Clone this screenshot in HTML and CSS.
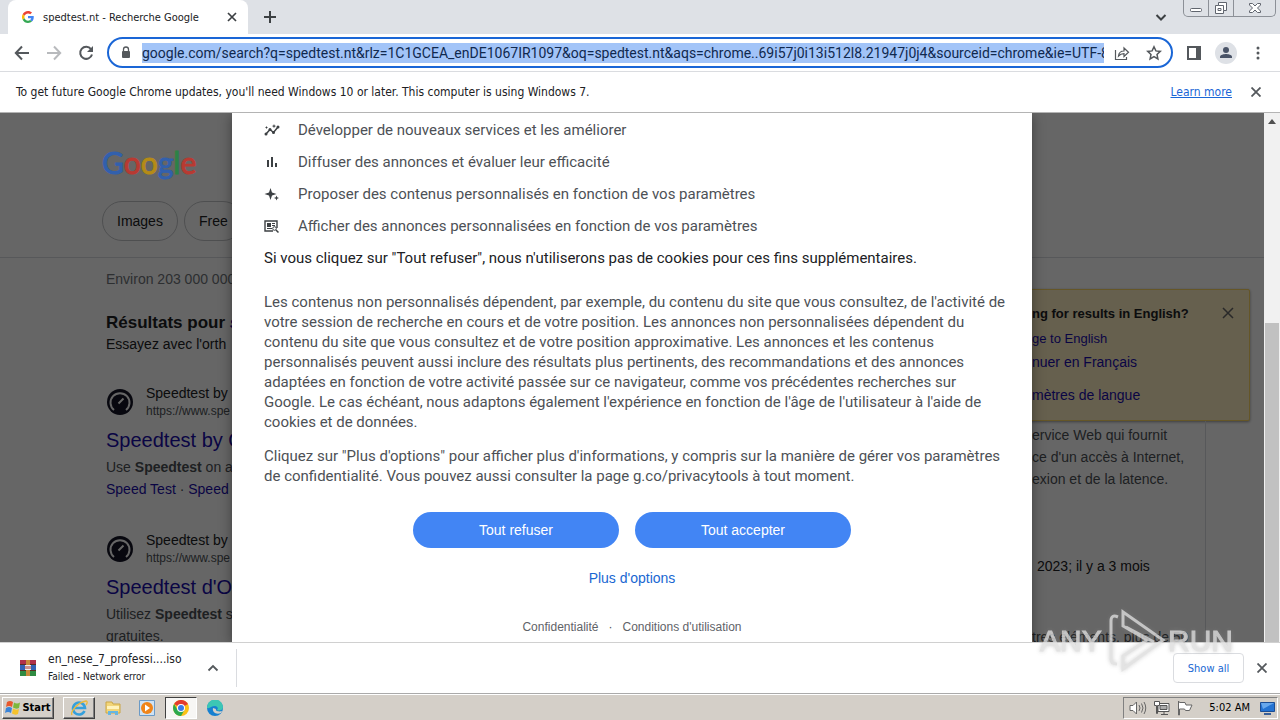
FILE: index.html
```
<!DOCTYPE html>
<html lang="fr">
<head>
<meta charset="utf-8">
<title>spedtest.nt - Recherche Google</title>
<link rel="stylesheet" href="styles.css">
</head>
<body>
<div class="desktop">
  <header class="tabstrip">
    <div class="tab">
      <svg class="favicon" viewBox="0 0 48 48" aria-hidden="true"><path fill="#ea4335" d="M24 9.500c3.500 0 6.700 1.200 9.200 3.600l6.900-6.900C35.900 2.400 30.500 0 24 0 14.600 0 6.500 5.400 2.600 13.200l8 6.200C12.400 13.700 17.700 9.500 24 9.500z"/><path fill="#4285f4" d="M47 24.500c0-1.600-.2-3.100-.4-4.500H24v9h13c-.6 3-2.300 5.500-4.800 7.200l7.700 6C44.400 38 47 31.800 47 24.500z"/><path fill="#fbbc05" d="M10.500 28.600a14.500 14.500 0 0 1 0-9.200l-8-6.200a24 24 0 0 0 0 21.600z"/><path fill="#34a853" d="M24 48c6.500 0 12-2.100 15.900-5.800l-7.700-6c-2.200 1.500-4.900 2.300-8.200 2.300-6.300 0-11.600-4.200-13.500-9.900l-8 6.200C6.500 42.600 14.600 48 24 48z"/></svg>
      <span class="tab-title">spedtest.nt - Recherche Google</span>
      <button class="icon-btn" aria-label="Close tab"><svg class="i10" viewBox="0 0 10 10"><path d="M1 1l8 8m0-8l-8 8" stroke="#3c4043" stroke-width="1.700"/></svg></button>
    </div>
    <button class="icon-btn new-tab" aria-label="New tab"><svg class="i12" viewBox="0 0 12 12"><path d="M6 0v12M0 6h12" stroke="#3c4043" stroke-width="2"/></svg></button>
    <button class="icon-btn tab-search" aria-label="Search tabs"><svg class="i12" viewBox="0 0 12 12"><path d="M1.500 4L6 8.500 10.500 4" fill="none" stroke="#3c4043" stroke-width="2"/></svg></button>
    <div class="win-controls">
      <button aria-label="Minimize"><svg width="14" height="14" viewBox="0 0 14 14"><rect x="1.500" y="7.500" width="11" height="3" rx="1" fill="#fff" stroke="#60656e"/></svg></button>
      <button aria-label="Restore"><svg width="14" height="14" viewBox="0 0 14 14"><path d="M4.500 1.500h8v8h-3v3h-8v-8h3z" fill="#fff" stroke="#60656e"/><path d="M4.500 4.500h5v5M4 7.500h3v2H4z" fill="none" stroke="#60656e"/></svg></button>
      <button class="win-close" aria-label="Close"><svg width="14" height="14" viewBox="0 0 14 14"><path d="M1.500 2.500h3L7 5l2.500-2.500h3V4L9.500 7l3 3v1.500h-3L7 9l-2.500 2.500h-3V10l3-3-3-3z" fill="#fff" stroke="#60656e"/></svg></button>
    </div>
  </header>

  <nav class="toolbar">
    <button class="icon-btn" aria-label="Back"><svg class="i16" viewBox="0 0 16 16"><path d="M15 8H2m6-6.500L1.800 8 8 14.500" fill="none" stroke="#54585c" stroke-width="2"/></svg></button>
    <button class="icon-btn" aria-label="Forward"><svg class="i16" viewBox="0 0 16 16"><path d="M1 8h13M8 1.500L14.200 8 8 14.500" fill="none" stroke="#b8babd" stroke-width="2"/></svg></button>
    <button class="icon-btn" aria-label="Reload"><svg class="i16" viewBox="0 0 16 16"><path d="M13 4.200A6 6 0 1 0 14 9.500" fill="none" stroke="#54585c" stroke-width="2"/><path d="M15 1v6H9z" fill="#54585c"/></svg></button>
    <div class="omnibox">
      <svg class="lock" viewBox="0 0 10 13"><path d="M2.500 6V3.500a2.500 2.500 0 0 1 5 0V6" fill="none" stroke="#54585c" stroke-width="1.300"/><rect x="1" y="5" width="8" height="7" rx="1" fill="#54585c"/></svg>
      <label class="url-label"><span class="sr">Address</span><input class="url" type="text" value="google.com/search?q=spedtest.nt&amp;rlz=1C1GCEA_enDE1067IR1097&amp;oq=spedtest.nt&amp;aqs=chrome..69i57j0i13i512l8.21947j0j4&amp;sourceid=chrome&amp;ie=UTF-8"></label>
      <button class="icon-btn" aria-label="Share"><svg class="i16" viewBox="0 0 16 16"><path d="M1.500 5v9.500h11V12M4.500 11c.4-3.500 2.500-5 5.500-5V3l4.500 4.300L10 11.500V8.700c-2.500 0-4 .6-5.500 2.300z" fill="none" stroke="#54585c" stroke-width="1.200"/></svg></button>
      <button class="icon-btn" aria-label="Bookmark"><svg class="i16" viewBox="0 0 16 16"><path d="M8 1.800l1.900 4.100 4.400.5-3.300 3 .9 4.500L8 11.600l-3.900 2.300.9-4.500-3.300-3 4.400-.5z" fill="none" stroke="#54585c" stroke-width="1.500"/></svg></button>
    </div>
    <button class="icon-btn" aria-label="Side panel"><svg class="i16" viewBox="0 0 16 16"><path d="M2 2h12v12H2z" fill="none" stroke="#54585c" stroke-width="2"/><path d="M10 1h5v14h-5z" fill="#54585c"/></svg></button>
    <button class="icon-btn profile" aria-label="Profile"><svg width="22" height="22" viewBox="0 0 22 22"><circle cx="11" cy="11" r="11" fill="#dee1e6"/><circle cx="11" cy="8" r="3" fill="#4a5468"/><path d="M5 16v-1.200C5 12.800 9 12 11 12s6 .8 6 2.800V16z" fill="#4a5468"/></svg></button>
    <button class="icon-btn" aria-label="Menu"><svg class="i16" viewBox="0 0 16 16" fill="#54585c"><circle cx="8" cy="3" r="1.500"/><circle cx="8" cy="8" r="1.500"/><circle cx="8" cy="13" r="1.500"/></svg></button>
  </nav>

  <div class="infobar">
    <span>To get future Google Chrome updates, you'll need Windows 10 or later. This computer is using Windows 7.</span>
    <a class="learn" href="#">Learn more</a>
    <button class="icon-btn" aria-label="Dismiss"><svg class="i10" viewBox="0 0 10 10"><path d="M.5.5l9 9m0-9l-9 9" stroke="#54585c" stroke-width="1.800"/></svg></button>
  </div>

  <div class="viewport">
    <div class="page">
      <div class="results" aria-hidden="true">
        <div class="search-head">
          <div class="logo"><span class="b">G</span><span class="r">o</span><span class="y">o</span><span class="b">g</span><span class="g">l</span><span class="r">e</span></div>
          <div class="chips"><a href="#" class="chip">Images</a><a href="#" class="chip">Free</a></div>
        </div>
        <div class="columns">
          <main class="list">
            <p class="stats">Environ 203 000 000</p>
            <p class="did">Résultats pour <a href="#"><i>s</i></a></p>
            <p class="try">Essayez avec l'orth</p>
            <article class="hit">
              <div class="site"><svg class="gauge" viewBox="0 0 28 28"><circle cx="14" cy="14" r="13" fill="#141526"/><path d="M8 22a9.500 9.500 0 1 1 12 0" fill="none" stroke="#fff" stroke-width="2"/><path d="M12.500 15.500l5-5" stroke="#fff" stroke-width="2"/></svg><div class="who"><span>Speedtest by</span><cite>https://www.spe</cite></div></div>
              <h3><a href="#">Speedtest by O</a></h3>
              <p>Use <b>Speedtest</b> on a</p>
              <p><a href="#">Speed Test</a> · <a href="#">Speed</a></p>
            </article>
            <article class="hit">
              <div class="site"><svg class="gauge" viewBox="0 0 28 28"><circle cx="14" cy="14" r="13" fill="#141526"/><path d="M8 22a9.500 9.500 0 1 1 12 0" fill="none" stroke="#fff" stroke-width="2"/><path d="M12.500 15.500l5-5" stroke="#fff" stroke-width="2"/></svg><div class="who"><span>Speedtest by</span><cite>https://www.spe</cite></div></div>
              <h3><a href="#">Speedtest d'O</a></h3>
              <p>Utilisez <b>Speedtest</b> s<br>gratuites.</p>
            </article>
          </main>
          <aside class="side">
            <div class="lang">
              <div class="lang-text">
                <b>ng for results in English?</b>
                <a class="small" href="#">ge to English</a>
                <a class="tight" href="#">nuer en Français</a>
                <a class="last" href="#">mètres de langue</a>
              </div>
              <button class="icon-btn" aria-label="Fermer"><svg class="i12" viewBox="0 0 12 12"><path d="M1 1l10 10M11 1L1 11" stroke="#666" stroke-width="1.500"/></svg></button>
            </div>
            <div class="card">
              <p>ervice Web qui fournit<br>ce d'un accès à Internet,<br>exion et de la latence.</p>
              <p class="date">2023; il y a 3 mois</p>
              <p>tres éléments, plus de 50</p>
            </div>
          </aside>
        </div>
      </div>
      <div class="shade"></div>
      <section class="dialog" role="dialog" aria-label="Cookies">
        <ul class="uses">
          <li><svg class="i16" viewBox="0 0 16 16"><path d="M2 12l4-4.500 3.500 3L14 5" fill="none" stroke="#3c4043" stroke-width="1.500"/><g fill="#3c4043"><circle cx="2" cy="12" r="1.500"/><circle cx="6" cy="7.500" r="1.500"/><circle cx="9.500" cy="10.500" r="1.500"/><circle cx="14" cy="5" r="1.500"/><path d="M10 2l.6 1.500 1.500.6-1.500.6L10 6.200l-.6-1.500-1.500-.6 1.500-.6zM2.500 4l.5 1 1 .5-1 .5-.5 1-.5-1-1-.5 1-.5z"/></g></svg>Développer de nouveaux services et les améliorer</li>
          <li><svg class="i16" viewBox="0 0 16 16"><path d="M3 6h2v7H3zm4-3h2v10H7zm4 6h2v4h-2z" fill="#3c4043"/></svg>Diffuser des annonces et évaluer leur efficacité</li>
          <li><svg class="i16" viewBox="0 0 16 16"><path d="M6.500 2L8 6.500 12.500 8 8 9.500 6.500 14 5 9.500 .500 8 5 6.500zM12.500 9.500l.7 1.800 1.800.7-1.800.7-.7 1.800-.7-1.800-1.800-.7 1.800-.7z" fill="#3c4043"/></svg>Proposer des contenus personnalisés en fonction de vos paramètres</li>
          <li><svg class="i16" viewBox="0 0 16 16"><path d="M9 13H1V3h12v7" fill="none" stroke="#3c4043" stroke-width="1.400"/><path d="M3 5h4v4H3zm5 0h3v1H8zm0 2h3v1H8zM3 10h5v1H3z" fill="#3c4043"/><circle cx="10.500" cy="10.500" r="1.800" fill="none" stroke="#3c4043"/><path d="M12 12l2.500 2.500" stroke="#3c4043" stroke-width="1.500"/></svg>Afficher des annonces personnalisées en fonction de vos paramètres</li>
        </ul>
        <p class="strong">Si vous cliquez sur "Tout refuser", nous n'utiliserons pas de cookies pour ces fins supplémentaires.</p>
        <p>Les contenus non personnalisés dépendent, par exemple, du contenu du site que vous consultez, de l'activité de<br>votre session de recherche en cours et de votre position. Les annonces non personnalisées dépendent du<br>contenu du site que vous consultez et de votre position approximative. Les annonces et les contenus<br>personnalisés peuvent aussi inclure des résultats plus pertinents, des recommandations et des annonces<br>adaptées en fonction de votre activité passée sur ce navigateur, comme vos précédentes recherches sur<br>Google. Le cas échéant, nous adaptons également l'expérience en fonction de l'âge de l'utilisateur à l'aide de<br>cookies et de données.</p>
        <p>Cliquez sur "Plus d'options" pour afficher plus d'informations, y compris sur la manière de gérer vos paramètres<br>de confidentialité. Vous pouvez aussi consulter la page g.co/privacytools à tout moment.</p>
        <div class="actions"><button class="pill">Tout refuser</button><button class="pill wide">Tout accepter</button></div>
        <a class="more" href="#">Plus d'options</a>
        <div class="legal"><a href="#">Confidentialité</a><span>·</span><a href="#">Conditions d'utilisation</a></div>
      </section>
    </div>
    <div class="scrollbar"><svg class="arrow" viewBox="0 0 16 17"><path d="M4 11l4-5 4 5z" fill="#505050"/></svg><div class="thumb"></div></div>
  </div>

  <div class="shelf">
    <svg class="rar" viewBox="0 0 16 16"><path fill="#b0304a" d="M0 0h16v5H0z"/><path fill="#3462b5" d="M0 5h16v5H0z"/><path fill="#2f8b42" d="M0 10h16v6H0z"/><path fill="#5b2b22" d="M0 4h16v1H0zm0 6h16v1H0z"/><path fill="#c98a3b" d="M6 0h4v16H6z"/><path fill="#eee" d="M5 5h6v5H5z"/><path d="M6 6v3m2-3v3m2-3v3" stroke="#a33"/></svg>
    <div class="file"><span>en_nese_7_professi....iso</span><small>Failed - Network error</small></div>
    <button class="icon-btn" aria-label="More"><svg class="i12" viewBox="0 0 12 12"><path d="M1.500 8.500L6 4l4.500 4.500" fill="none" stroke="#54585c" stroke-width="1.800"/></svg></button>
    <div class="divider"></div>
    <button class="show-all">Show all</button>
    <button class="icon-btn" aria-label="Close shelf"><svg class="i10" viewBox="0 0 10 10"><path d="M.5.5l9 9m0-9l-9 9" stroke="#54585c" stroke-width="1.800"/></svg></button>
  </div>

  <footer class="taskbar">
    <button class="start"><svg width="16" height="16" viewBox="0 0 16 16"><path d="M2 2q3-2 6 0L7 7Q4 5 1 7z" fill="#e8582c"/><path d="M9 2.500q3 2 6 0L14 8q-3 1.500-6-.5z" fill="#7db83a"/><path d="M1 8q3-2 6 0l-1 5q-3-2-6 0z" fill="#3a84d8"/><path d="M8 8.500q3 2 6 .5l-1 5q-3 1.500-6-.5z" fill="#f5c22c"/></svg>Start</button>
    <button class="task raised" aria-label="Internet Explorer"><svg width="18" height="18" viewBox="0 0 18 18"><path d="M14.500 12A6 6 0 1 1 15 9H5" fill="none" stroke="#35a0dc" stroke-width="2.600"/><path d="M2 16C0 13 8 3 16 2c2 0 1 3 0 4" fill="none" stroke="#e9b93a" stroke-width="1.300"/></svg></button>
    <button class="task" aria-label="Explorer"><svg width="16" height="16" viewBox="0 0 16 16"><path d="M1 2h6l1 2h7v9H1z" fill="#f2d578" stroke="#caa646"/><path d="M2 6h12v3H2z" fill="#fff3bd"/><path d="M3 15v-4h10v4h-3v-2H6v2z" fill="#66b6e2"/></svg></button>
    <button class="task" aria-label="Media Player"><svg width="16" height="16" viewBox="0 0 16 16"><path d="M.5.500h15v15H.5z" fill="#cfe2f3" stroke="#6b9ac6"/><circle cx="8" cy="8" r="6" fill="#f08418"/><path d="M6 4.500l5 3.500-5 3.500z" fill="#fff"/></svg></button>
    <button class="task pressed" aria-label="Chrome"><svg width="16" height="16" viewBox="0 0 16 16"><circle cx="8" cy="8" r="8" fill="#fbc116"/><path d="M8 8L1.100 4A8 8 0 0 1 15 4z" fill="#e33b2e"/><path d="M1.100 4A8 8 0 0 0 8 16l3.500-6H4.500z" fill="#2da94f"/><circle cx="8" cy="8" r="4" fill="#fff"/><circle cx="8" cy="8" r="3" fill="#3a7be8"/></svg></button>
    <button class="task" aria-label="Edge"><svg width="16" height="16" viewBox="0 0 16 16"><circle cx="8" cy="8" r="8" fill="#1680d0"/><path d="M0 8a8 8 0 0 1 16-1c0 4-5 4-6 3 2-2 0-4-2-4-4 0-5 3-8 2z" fill="#3cc6b4"/><path d="M6 8c-1 4 3 7 8 5l1-2c-3 1-7 0-6-2z" fill="#d5d0c8"/></svg></button>
    <div class="tray">
      <svg width="18" height="16" viewBox="0 0 18 16" fill="#fff" stroke="#666"><path d="M1 5.500h3L7.500 2v12L4 10.500H1z"/><path d="M10 5q2 3 0 6M12.500 3.500q3 4.500 0 9M15 2q3.500 6 0 12" fill="none"/></svg>
      <svg width="18" height="16" viewBox="0 0 18 16" fill="#fff" stroke="#555"><path d="M5 3.500h11v8H5zM8 14.500h7M11 12v2"/><path d="M7 5.500h7v4H7z" fill="#aaa"/><path d="M1.500 1.500h5v4h-2v8h-1v-8h-2z"/></svg>
      <svg width="16" height="16" viewBox="0 0 16 16" fill="#fff" stroke="#666"><path d="M1.500 1v14h1V9h5l1 1.500h4L15 5H9L8 2.500H2.500z"/></svg>
      <time>5:02 AM</time>
      <svg width="15" height="14" viewBox="0 0 15 14"><path d="M.5 1.500h14v9H.5z" fill="#2473d2" stroke="#1b4d94"/><path d="M1 2h13L3 8z" fill="#68a8ec"/><path d="M4 12h7v2H4z" fill="#385f98"/></svg>
    </div>
  </footer>

  <svg class="watermark" viewBox="0 0 200 70" aria-hidden="true">
    <text x="4" y="46">ANY</text><text x="132" y="46">RUN</text>
    <path d="M87 7l40 28-40 29V51l24-16-24-14zM90 22l28 15M82 12q-7-3-7 4v38q0 5 6 5" />
  </svg>
</div>
</body>
</html>
```
FILE: styles.css
```
* { box-sizing: border-box; }
body { margin: 0; font-family: "Liberation Sans", Arial, sans-serif; font-size: 14px; color: #202124; }
button { font: inherit; color: inherit; }
p, h3, ul { margin: 0; padding: 0; font-weight: normal; }
a { color: #1a0dab; text-decoration: none; }
.i10 { width: 10px; height: 10px; display: block; }
.i12 { width: 12px; height: 12px; display: block; }
.i16 { width: 16px; height: 16px; display: block; flex: none; }
.icon-btn { border: 0; background: none; padding: 0; flex: none; display: flex; align-items: center; justify-content: center; }
.sr { position: absolute; width: 1px; height: 1px; overflow: hidden; clip-path: inset(50%); }
.desktop { position: relative; height: 100vh; display: flex; flex-direction: column; overflow: hidden; background: #fff; }
.tabstrip, .toolbar, .infobar, .shelf, .taskbar { flex: none; font-family: "DejaVu Sans Condensed", "DejaVu Sans", sans-serif; font-size: 12px; display: flex; align-items: center; }

.tabstrip { height: 34px; background: #dee1e6; }
.tab { align-self: stretch; width: 240px; margin-left: 8px; padding: 0 11px 0 14px; display: flex; align-items: center; background: #fff; border-radius: 8px 8px 0 0; font-size: 11px; }
.favicon { width: 12px; height: 12px; margin-right: 9px; }
.tab-title { flex: 1; white-space: nowrap; }
.new-tab { margin-left: 16px; }
.tab-search { margin-left: auto; }
.win-controls { align-self: flex-start; margin: 0 4px 0 16px; display: flex; height: 17px; border: 1px solid #8c9097; border-top: 0; border-radius: 0 0 5px 5px; }
.win-controls button { width: 25px; border: 0; border-right: 1px solid #8c9097; background: none; padding: 0; display: flex; justify-content: center; align-items: center; }
.win-controls .win-close { width: 41px; border: 0; }

.toolbar { height: 38px; padding: 0 14px; gap: 16px; border-bottom: 1px solid #dadce0; }
.omnibox { flex: 1; min-width: 0; height: 31px; margin: 0 -3px 0 -3px; padding: 0 9px 0 12px; display: flex; align-items: center; gap: 16px; border: 2px solid #1a66d6; border-radius: 16px; }
.lock { width: 10px; height: 13px; flex: none; margin-right: -5px; }
.url-label { flex: 1; min-width: 0; display: flex; margin-right: -6px; }
.url { width: 100%; height: 20px; border: 0; padding: 0; background: #a2c4f8; color: #10294f; font: 14px Roboto, sans-serif; outline: 0; }
.profile { margin: 0 -3px; }

.infobar { height: 41px; padding: 0 19px 0 16px; border-bottom: 1px solid #b4b4b4; }
.learn { margin: 0 19px 0 auto; color: #1a66d6; text-decoration: underline; }

.viewport { flex: 1; min-height: 0; display: flex; }
.page { position: relative; flex: 1; min-width: 0; overflow: hidden; }
.shade { position: absolute; inset: 0; background: rgba(0, 0, 0, .6); }
.results { height: 100%; }
.search-head { height: 145px; padding: 28px 102px 0; border-bottom: 1px solid #dadce0; }
.logo { height: 60px; font: 30px/42px Lato, sans-serif; -webkit-text-stroke: 1px; position: relative; z-index: 1; width: max-content; }
.b { color: #3260ad; } .r { color: #b83a32; } .y { color: #b58b16; } .g { color: #2d8245; }
.chips { display: flex; gap: 6px; }
.chip { height: 40px; padding: 0 14px; border: 1px solid #c4c6c9; border-radius: 20px; color: #202124; line-height: 38px; }
.columns { display: flex; justify-content: space-between; padding: 0 14px 0 106px; white-space: nowrap; line-height: 22px; color: #4d5156; }
.list { width: 600px; padding-top: 10px; }
.stats { color: #70757a; }
.did { margin-top: 21px; font-size: 17px; line-height: 24px; color: #202124; font-weight: bold; }
.try { line-height: 18px; color: #202124; }
.hit { margin-top: 30px; }
.hit + .hit { margin-top: 30px; }
.site { display: flex; align-items: center; gap: 12px; height: 38px; }
.gauge { width: 28px; height: 28px; }
.who { display: flex; flex-direction: column; line-height: 18px; color: #202124; }
.who cite { font-style: normal; font-size: 12px; color: #4d5156; }
.hit h3 { font-size: 20px; line-height: 26px; margin: 6px 0 3px; }
.side { width: 400px; padding-top: 31px; }
.lang { height: 132px; display: flex; justify-content: flex-end; align-items: flex-start; padding: 13px 15px 0 0; background: #feefc3; border: 1px solid #fdd663; border-radius: 2px; box-shadow: 0 1px 3px rgba(0, 0, 0, .4); color: #202124; }
.lang-text { width: 190px; display: flex; flex-direction: column; align-items: flex-start; line-height: 22px; }
.lang-text b { font-size: 13px; line-height: 22px; }
.lang-text .small { font-size: 13px; line-height: 28px; }
.lang-text .tight { line-height: 18px; }
.lang-text .last { margin-top: 13px; }
.lang .icon-btn { margin-top: 4px; }
.card { width: 356px; height: 300px; padding: 3px 0 0 182px; border-right: 1px solid #dadce0; }
.card .date { margin: 65px 5px 49px; color: #202124; }

.dialog { position: absolute; top: 0; left: 50%; width: 800px; height: 100%; margin-left: -400px; padding: 1px 32px 0; background: #fff; box-shadow: 0 2px 12px rgba(0, 0, 0, .4); color: #4d5156; line-height: 20px; white-space: nowrap; }
.uses { list-style: none; }
.uses li { height: 32px; display: flex; align-items: center; gap: 18px; }
.uses li, .dialog p { font-family: Roboto, "Liberation Sans", sans-serif; font-size: 15px; }
.dialog p { margin-bottom: 14px; }
.dialog .strong { margin: 6px 0 24px; color: #202124; }
.actions { display: flex; justify-content: center; gap: 16px; padding-top: 12px; }
.pill { width: 206px; height: 36px; border: 0; border-radius: 18px; background: #4285f4; color: #fff; }
.pill.wide { width: 216px; }
.more { display: block; margin-top: 20px; text-align: center; color: #1967d2; }
.legal { display: flex; justify-content: center; gap: 10px; margin-top: 29px; font-size: 12px; }
.legal a { color: #5f6368; }
.scrollbar { width: 16px; flex: none; background: #f1f1f1; display: flex; flex-direction: column; align-items: stretch; }
.arrow { height: 17px; flex: none; }
.thumb { flex: 1; margin: 193px 1px 0; background: #c1c1c1; }

.shelf { height: 51px; padding: 0 13px 0 20px; border-top: 1px solid #d0d0d0; background: #fff; }
.rar { width: 16px; height: 16px; }
.file { width: 147px; margin: 0 12px 0 12px; display: flex; flex-direction: column; line-height: 17px; white-space: nowrap; }
.file small { font-size: 10px; }
.divider { width: 1px; height: 38px; margin-left: 17px; background: #dadce0; }
.show-all { width: 71px; height: 30px; margin: 0 13px 0 auto; padding: 0; font-size: 11px; color: #1967d2; background: #fff; border: 1px solid #dadce0; border-radius: 4px; }

.taskbar { height: 27px; background: #d4cfc8; border-top: 1px solid #aaa; box-shadow: inset 0 1px #fff; padding: 1px 2px 0; color: #000; }
.start { height: 22px; width: 52px; padding: 0; display: flex; align-items: center; justify-content: center; gap: 1px; font-size: 11px; font-weight: bold; margin-right: 9px; background: #d4cfc8; border: 1px solid; border-color: #fff #404040 #404040 #fff; box-shadow: inset -1px -1px #808080; }
.task { width: 32px; height: 22px; margin-right: 2px; padding: 0; display: flex; align-items: center; justify-content: center; background: none; border: 1px solid transparent; }
.task.raised { border-color: #fff #404040 #404040 #fff; box-shadow: inset -1px -1px #808080; }
.task.pressed { background: #f7f6f4; border-color: #404040 #fff #fff #404040; }
.tray { height: 22px; margin-left: auto; padding: 0 2px 0 5px; display: flex; align-items: center; gap: 6px; font-size: 11px; border: 1px solid; border-color: #808080 #fff #fff #808080; }
.tray time { margin: 0 4px 0 10px; }
.watermark { position: absolute; right: 44px; bottom: 45px; width: 200px; height: 70px; opacity: .8; overflow: visible; filter: drop-shadow(0 0 2px #8888); }
.watermark text { font: 30px "Liberation Sans Narrow", "Liberation Sans", sans-serif; fill: #ddd; stroke: #ddd; stroke-width: 1px; }
.watermark path { fill: none; stroke: #ddd; stroke-width: 3; }
```
